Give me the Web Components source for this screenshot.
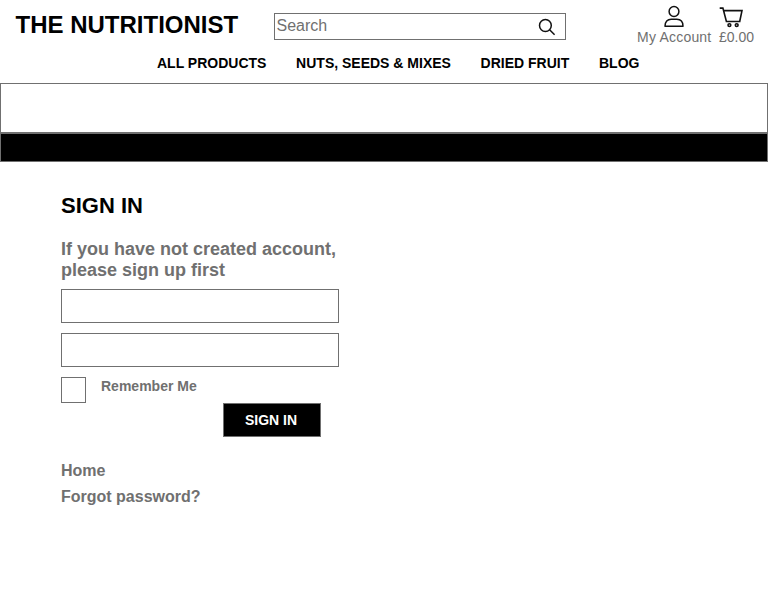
<!DOCTYPE html>
<html lang="en">
<head>
<meta charset="utf-8">
<title>The Nutritionist</title>
<style>
html,body{margin:0;background:#fff}
body{font-family:"Liberation Sans",Arial,sans-serif;color:#707070;height:611px;overflow:hidden}
</style>
</head>
<body>
<nutri-app></nutri-app>
<script>
function define(name, html) {
  const t = document.createElement('template');
  t.innerHTML = '<style>*{box-sizing:border-box}</style>' + html;
  customElements.define(name, class extends HTMLElement {
    constructor() {
      super();
      this.attachShadow({mode: 'open'}).appendChild(t.content.cloneNode(true));
    }
  });
}

define('search-box', `
<style>
:host{display:flex;box-sizing:border-box;width:292px;height:27px;border:1px solid #707070;padding:0 9px 0 1.5px;justify-content:space-between;font-size:16px;line-height:24px}
svg{display:block;margin-top:4px}
</style>
<span>Search</span>
<svg width="18" height="18" viewBox="0 0 18 18" fill="none" stroke="#111" stroke-width="1.5"><circle cx="7.4" cy="7.5" r="5.9"/><path d="M11.6 11.7 16.6 16.7"/></svg>`);

define('account-link', `
<style>
:host{display:block;text-align:center;font-size:14px;line-height:16px;white-space:nowrap}
.icon{height:24px;display:flex;justify-content:center}
</style>
<div class="icon"><slot name="icon"></slot></div>
<div><slot></slot></div>`);

define('site-header', `
<style>
:host{display:flex;height:50px;align-items:flex-start;padding:0 14px 0 15.5px}
h1{margin:11px 0 0;width:258.5px;font-size:24px;line-height:28px;color:#000;white-space:nowrap}
search-box{margin-top:13px}
.links{margin:5px 0 0 auto;display:flex;gap:7.5px}
.account{letter-spacing:.2px}
svg{display:block;overflow:visible}
</style>
<h1>THE NUTRITIONIST</h1>
<search-box></search-box>
<div class="links">
<account-link class="account"><svg slot="icon" width="21" height="22" viewBox="0 0 21 22" fill="none" stroke="#111" stroke-width="1.5"><circle cx="10" cy="6.5" r="4.9"/><path d="M1 21.2C1 16.6 3.5 14.2 7.2 14.2H12.8C16.5 14.2 19 16.6 19 21.2Z" stroke-linejoin="round"/></svg>My Account</account-link>
<account-link><svg slot="icon" width="35" height="22" viewBox="0 0 35 22" fill="none" stroke="#111" stroke-width="1.6"><path d="M.7 3.1H3.9L7.4 16.5H21.5M4.6 5.6H23L20.7 16.5"/><circle cx="10.4" cy="20.1" r="1.4"/><circle cx="17.7" cy="20.1" r="1.4"/></svg>£0.00</account-link>
</div>`);

define('site-nav', `
<style>
:host{display:flex;height:33px;padding:5px 0 0 157px;gap:29.7px;font-size:14px;line-height:16px;font-weight:bold;color:#000;white-space:nowrap}
</style><slot></slot>`);

define('banner-strip', `
<style>
:host{display:block}
div{border:1px solid #707070}
.light{height:50px}
.dark{height:29px;background:#000}
</style><div class="light"></div><div class="dark"></div>`);

define('text-field', `
<style>:host{display:block;box-sizing:border-box;width:278px;height:34px;border:1px solid #707070;margin-bottom:10px}</style>`);

define('check-field', `
<style>
:host{display:flex;gap:15px;height:26px;font-size:14px;line-height:18px;font-weight:bold}
i{width:25px;height:26px;border:1px solid #707070}
</style><i></i><span><slot></slot></span>`);

define('action-button', `
<style>
:host{display:block;box-sizing:border-box;width:98px;height:34px;background:#000;border:1px solid #707070;color:#fff;font-size:14px;line-height:32px;font-weight:bold;padding-left:21px}
</style><slot></slot>`);

define('sign-in-form', `
<style>
:host{display:block;padding:31px 0 0 61px;font-weight:bold}
h2{margin:0 0 20px;font-size:22px;line-height:26px;color:#000}
p{margin:0 0 8px;font-size:18px;line-height:21px;width:300px}
action-button{margin-left:162px}
nav{display:flex;flex-direction:column;margin-top:21px;font-size:16px;line-height:26px}
</style>
<h2>SIGN IN</h2>
<p>If you have not created account,<br>please sign up first</p>
<text-field></text-field>
<text-field></text-field>
<check-field>Remember Me</check-field>
<action-button>SIGN IN</action-button>
<nav><span>Home</span><span>Forgot password?</span></nav>`);

define('nutri-app', `
<style>:host{display:block}</style>
<site-header></site-header>
<site-nav><span>ALL PRODUCTS</span><span>NUTS, SEEDS &amp; MIXES</span><span>DRIED FRUIT</span><span>BLOG</span></site-nav>
<banner-strip></banner-strip>
<sign-in-form></sign-in-form>`);
</script>
</body>
</html>
